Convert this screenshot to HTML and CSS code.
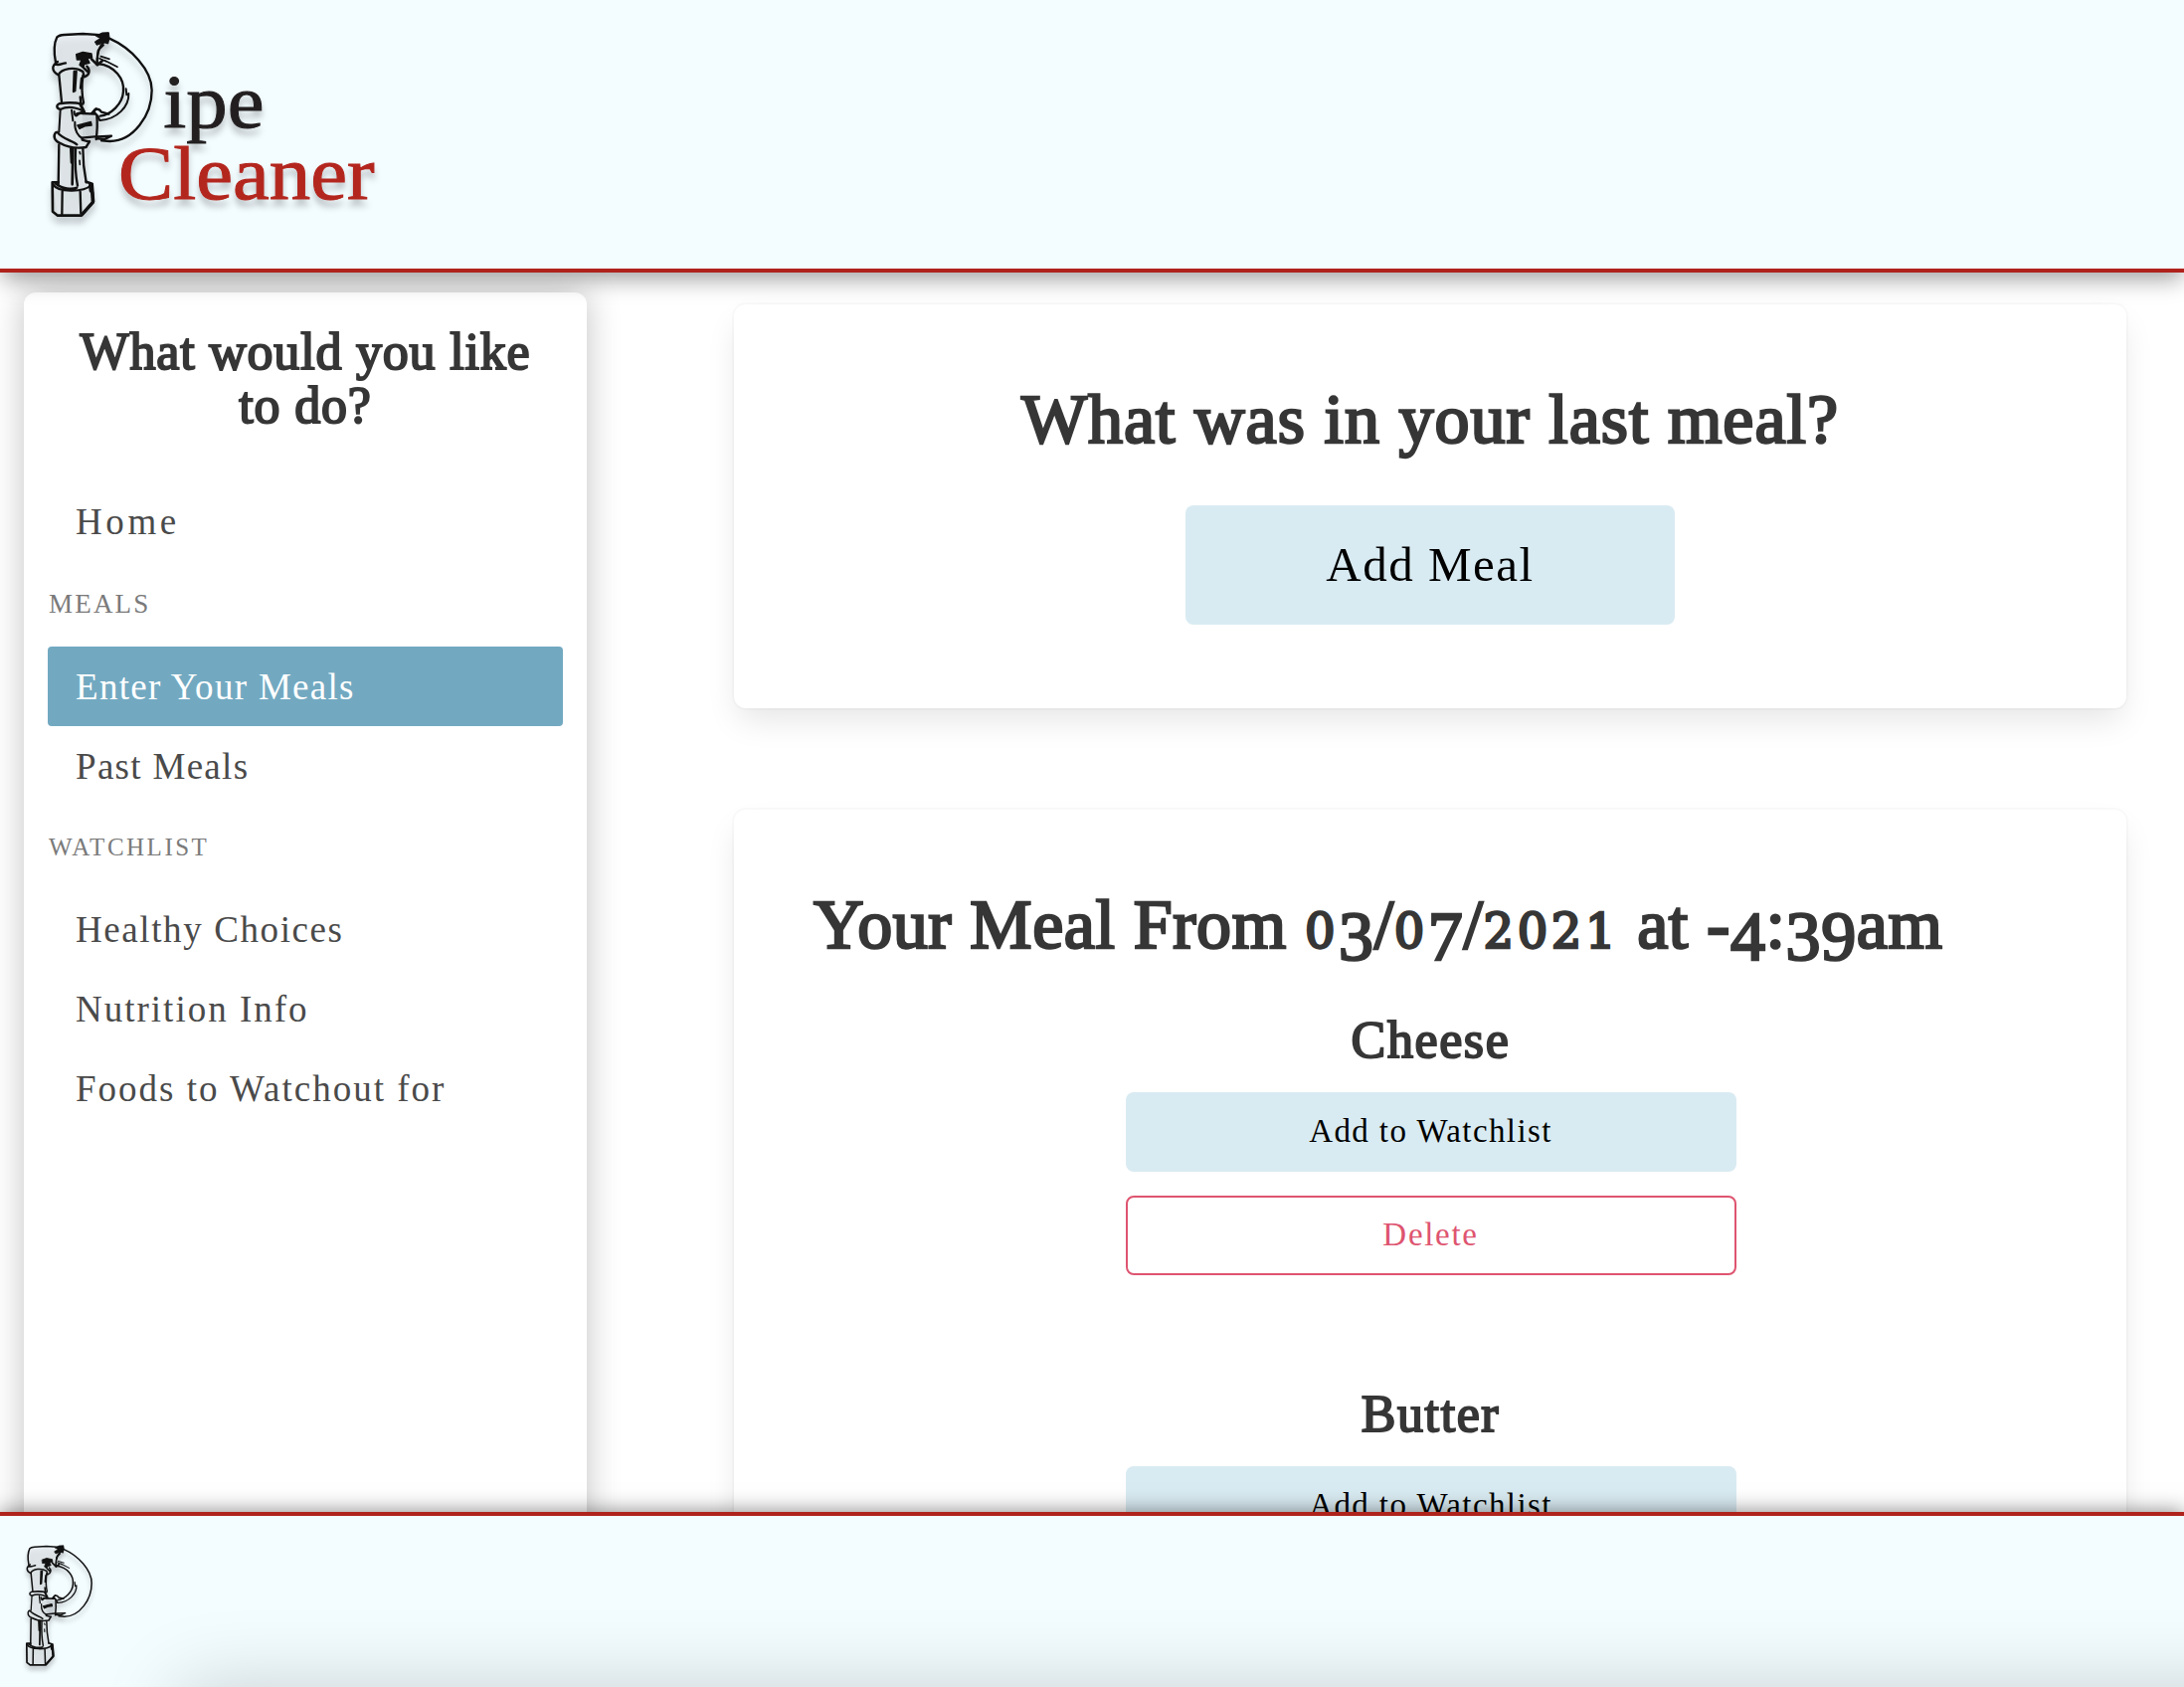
FILE: index.html
```html
<!DOCTYPE html>
<html lang="en">
<head>
<meta charset="utf-8">
<title>Pipe Cleaner</title>
<link rel="stylesheet" href="styles.css">
</head>
<body>
<header class="header">
  <svg class="logo" viewBox="0 0 1110 660" role="img" aria-label="Pipe Cleaner">
    <defs>
      <g id="pipe" fill="none" stroke="#111" stroke-width="7" stroke-linecap="round" stroke-linejoin="round">
        <!-- metal tint -->
        <path d="M82 52L224 46L203 132L160 150L172 384L170 490L190 548L156 590L84 590L68 490L86 490L88 376L78 340L92 270L88 166L70 150Z" fill="#e2e8eb" fill-opacity=".7" stroke="none"/>
        <path d="M158 282L196 280L202 360L160 358Z" fill="#c9d0d4" fill-opacity=".8" stroke="none"/>
        <!-- top elbow -->
        <path d="M78 128C72 98 72 72 82 52Q88 46 104 45L160 42L224 46"/>
        <path d="M236 60C212 70 202 94 203 132"/>
        <path d="M200 48L218 39L238 38L240 54L236 72L224 68L202 76L196 66L212 56Z" fill="#111" stroke-width="3"/>
        <path d="M222 76L206 92L202 134" stroke-width="6"/>
        <path d="M140 104L160 97L186 102L188 114L174 116L180 130L164 134L162 146L150 136L156 120L142 120Z" fill="#111" stroke-width="4"/>
        <path d="M186 118L204 136L218 124" stroke-width="8"/>
        <!-- upper rim -->
        <path d="M84 126C64 138 66 156 86 166C96 146 136 140 160 156M76 134C90 138 96 132 108 130M160 156L164 172C182 166 182 150 172 140M164 146L176 158"/>
        <!-- bend -->
        <path d="M240 56C304 84 368 150 368 212C368 288 312 366 242 366L216 364"/>
        <path d="M204 352L246 350L226 360L204 358" stroke-width="7"/>
        <path d="M206 132C256 138 286 178 282 216C280 254 244 286 212 290"/>
        <path d="M290 208L292 226M298 222C300 262 262 300 212 303" stroke-width="6"/>
        <path d="M214 110L240 118M226 122L264 142M210 116L232 126" stroke-width="5"/>
        <!-- upper pipe -->
        <path d="M88 166L96 248M160 168C156 200 158 232 162 250"/>
        <path d="M134 156L132 216M140 156L136 214" stroke-width="7"/>
        <path d="M152 232L154 252M156 176L153 206" stroke-width="7"/>
        <!-- middle rim and joint -->
        <path d="M90 252C78 258 80 266 92 270C112 260 138 264 160 274M94 252C118 248 140 250 160 254" />
        <path d="M152 254L164 278L142 284" stroke-width="9"/>
        <path d="M92 272L88 338M126 272L130 304M134 276C134 292 142 292 146 284M136 308C134 334 146 352 160 358" stroke-width="6"/>
        <path d="M158 282L196 284M156 356L196 352M186 282L200 268M202 290C204 310 204 330 200 360"/>
        <path d="M192 280C194 266 208 266 216 278L238 284M192 276L206 292L210 302"/>
        <path d="M144 318L184 308L186 318L166 320L150 328Z" fill="#111" stroke-width="5"/>
        <!-- lower rim -->
        <path d="M78 340C68 352 76 366 92 372C116 386 144 388 170 384L180 366M82 338C98 360 128 364 142 376M158 362L180 368L170 382"/>
        <!-- lower pipe -->
        <path d="M88 376L86 498M160 388C160 426 164 460 170 490M138 390C136 430 138 470 144 500"/>
        <path d="M130 388L128 496M124 388L126 430" stroke-width="8"/>
        <path d="M150 398L152 404M150 424L151 436" stroke-width="5"/>
        <!-- hex nut -->
        <path d="M86 490L68 490L69 578L84 590L156 590L192 548L188 494L170 488" stroke-width="8"/>
        <path d="M70 496C84 520 160 522 186 498M78 494C96 510 128 512 142 506M98 516L97 586M152 518L154 584"/>
        <path d="M188 520L190 550L160 584M182 498L184 516" stroke-width="10"/>
      </g>
    </defs>
    <g class="logo-art">
      <use href="#pipe"/>
      <text class="logo-ipe" x="403" y="325" textLength="304" lengthAdjust="spacingAndGlyphs">ipe</text>
      <text class="logo-cleaner" x="267" y="540" textLength="773" lengthAdjust="spacingAndGlyphs">Cleaner</text>
    </g>
  </svg>
</header>

<div class="content">
  <aside class="sidebar">
    <h2 class="sidebar-title">What would you like<br>to do?</h2>
    <nav class="menu">
      <a class="menu-item menu-item-home">Home</a>
      <p class="menu-label">MEALS</p>
      <a class="menu-item menu-item-meal is-active">Enter Your Meals</a>
      <a class="menu-item menu-item-meal">Past Meals</a>
      <p class="menu-label menu-label-small">WATCHLIST</p>
      <a class="menu-item menu-item-healthy">Healthy Choices</a>
      <a class="menu-item">Nutrition Info</a>
      <a class="menu-item">Foods to Watchout for</a>
    </nav>
  </aside>

  <main class="main">
    <section class="box">
      <h1 class="title title-center">What was in your last meal?</h1>
      <button class="button button-large">Add Meal</button>
    </section>
    <section class="box box-meal">
      <h1 class="title title-meal">Your Meal From <span class="num-x">0</span><span class="num-low">3</span>/<span class="num-x">0</span><span class="num-low">7</span>/<span class="num-x">2021</span> at -<span class="num-low">4</span>:<span class="num-low">39</span>am</h1>
      <div class="food">
        <h2 class="food-name">Cheese</h2>
        <button class="button">Add to Watchlist</button>
        <button class="button button-delete">Delete</button>
      </div>
      <div class="food">
        <h2 class="food-name">Butter</h2>
        <button class="button">Add to Watchlist</button>
      </div>
    </section>
  </main>
</div>

<footer class="footer">
  <svg class="footer-logo" viewBox="60 30 330 620" aria-hidden="true"><g class="logo-art"><use href="#pipe"/></g></svg>
  <div class="footer-overlay"><div class="footer-shade"></div></div>
</footer>
</body>
</html>
```
FILE: styles.css
```css
* { box-sizing: border-box; }

body {
  margin: 0;
  height: 1696px;
  display: flex;
  flex-direction: column;
  overflow: hidden;
  background: #fff;
  color: #4a4a4a;
  font-family: "Liberation Serif", "Times New Roman", serif;
}

h1, h2, p { margin: 0; font-weight: 400; }

.header {
  position: relative;
  z-index: 2;
  flex: none;
  height: 274px;
  padding: 20px 30px;
  background: #f3fcff;
  border-bottom: 4px solid #af231c;
  box-shadow: 0 8px 22px -2px rgba(10, 10, 10, .4);
}

.logo { display: block; width: 370px; height: 220px; overflow: visible; }
.logo-art { filter: drop-shadow(0 20px 10px rgba(0, 0, 0, .22)); }
.logo-ipe, .logo-cleaner { font-size: 228px; stroke-width: 3px; }
.logo-ipe { fill: #231f20; stroke: #231f20; }
.logo-cleaner { fill: #b3261e; stroke: #b3261e; }

.content {
  flex: 1;
  min-height: 0;
  display: flex;
  align-items: flex-start;
  gap: 148px;
  padding: 20px 58px 0 24px;
  overflow: hidden;
}

.sidebar {
  flex: none;
  width: 566px;
  height: 1400px;
  padding: 33px 24px;
  background: #fff;
  border-radius: 12px;
  box-shadow: 0 0 34px rgba(10, 10, 10, .24);
}

.sidebar-title, .food-name {
  color: #363636;
  font-size: 52px;
  line-height: 54px;
  text-align: center;
  -webkit-text-stroke: 2px #363636;
}
.sidebar-title { margin-bottom: 49px; letter-spacing: .8px; }

.menu-item {
  display: block;
  height: 80px;
  padding-left: 28px;
  border-radius: 4px;
  font-size: 37px;
  line-height: 81px;
  letter-spacing: 2px;
}
.menu-item-home { letter-spacing: 3.6px; }
.menu-item-meal { letter-spacing: 1.3px; }
.menu-item-healthy { letter-spacing: 1.6px; }
.menu-item.is-active { background: #72a9c1; color: #fff; }

.menu-label {
  padding-left: 1px;
  color: #7a7a7a;
  font-size: 27px;
  line-height: 86px;
  letter-spacing: 2.2px;
}
.menu-label-small { font-size: 25px; line-height: 84px; letter-spacing: 2.5px; }

.main {
  flex: 1;
  display: flex;
  flex-direction: column;
  gap: 102px;
  padding-top: 12px;
}

.box {
  height: 406px;
  padding: 76px 80px 0;
  display: flex;
  flex-direction: column;
  align-items: center;
  background: #fff;
  border-radius: 12px;
  box-shadow: 0 16px 32px -4px rgba(10, 10, 10, .1), 0 0 0 2px rgba(10, 10, 10, .02);
}
.box-meal { height: 1000px; }

.title {
  color: #363636;
  font-size: 70px;
  line-height: 80px;
  letter-spacing: 1px;
  white-space: nowrap;
  -webkit-text-stroke: 2.5px #363636;
}
.title-center { margin-bottom: 46px; }
.title-meal { align-self: flex-start; margin-bottom: 49px; letter-spacing: .6px; }

/* old-style figures: x-height 0, 1, 2 and descending 3, 4, 7, 9 */
.num-x { font-family: "DejaVu Serif", serif; font-size: 48px; line-height: 1; letter-spacing: 3.6px; -webkit-text-stroke-width: 2.6px; }
.num-low { position: relative; top: 12px; }

.button {
  width: 614px;
  height: 80px;
  padding: 0 0 2px;
  border: 0;
  border-radius: 8px;
  background: #d9ebf2;
  color: #000;
  font: 33px/78px "Liberation Serif", "Times New Roman", serif;
  letter-spacing: 1.4px;
}
.button-large { width: 492px; height: 120px; padding: 0; font-size: 49px; line-height: 120px; letter-spacing: 1.5px; }
.button-delete { margin-top: 24px; border: 2px solid #de5570; background: #fff; color: #de5570; line-height: 74px; letter-spacing: 1.7px; }

.food { display: flex; flex-direction: column; align-items: center; margin: 0 0 113px 1px; }
.food-name { margin-bottom: 25px; letter-spacing: 1.6px; }

.footer {
  position: relative;
  z-index: 2;
  flex: none;
  height: 176px;
  padding: 28px 25px;
  background: #f3fcff;
  border-top: 4px solid #af231c;
  box-shadow: 0 0 20px rgba(10, 10, 10, .5);
}
.footer-logo { display: block; width: 72px; height: 135px; overflow: visible; }

/* shadow rising from the lower edge of the footer */
.footer-overlay { position: absolute; inset: 0; overflow: hidden; }
.footer-shade {
  position: absolute;
  left: 180px;
  right: -100px;
  top: 172px;
  height: 100px;
  box-shadow: 0 0 80px rgba(10, 10, 10, .18);
}
```
